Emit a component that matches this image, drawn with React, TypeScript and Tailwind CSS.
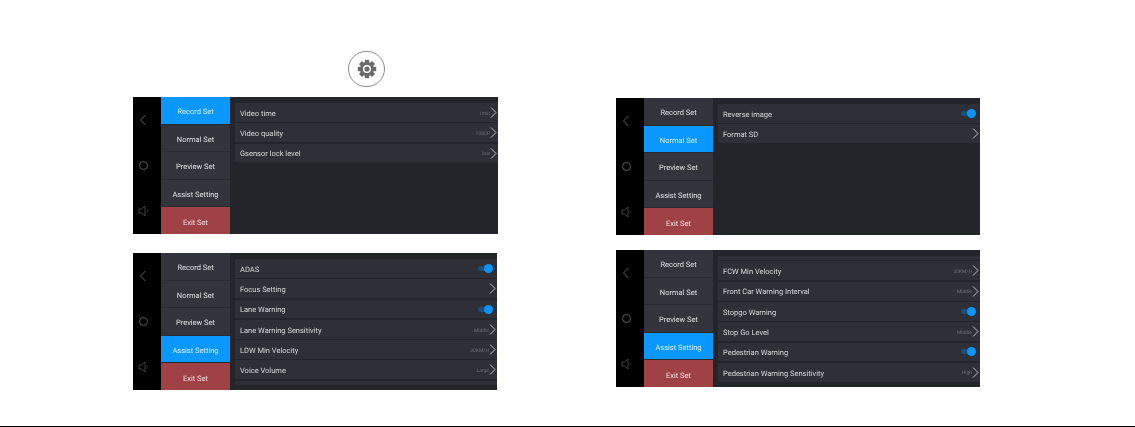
const menu = ['Record Set', 'Normal Set', 'Preview Set', 'Assist Setting'];

type Row = { label: string; value?: string; toggle?: boolean };

const Chevron = () => (
  <svg width="7" height="11" viewBox="0 0 7 11" fill="none" className="shrink-0">
    <path d="M1 0.5 L6 5.5 L1 10.5" stroke="#e4e4e6" strokeWidth="0.8" />
  </svg>
);

const Toggle = () => (
  <div className="relative mr-[4px] h-[5px] w-[14px] rounded-full bg-[#1b4f7c]">
    <div className="absolute right-[-1px] top-[-2px] h-[9px] w-[9px] rounded-full bg-[#0c93f5]" />
  </div>
);

const SideIcons = () => (
  <div className="flex w-[28px] shrink-0 flex-col bg-black pr-[8px]">
    <div className="flex flex-1 items-center justify-center">
      <svg width="8" height="12" viewBox="0 0 8 12" fill="none">
        <path d="M6.5 1 L1.5 6 L6.5 11" stroke="#5b5b5e" strokeWidth="1" />
      </svg>
    </div>
    <div className="flex flex-1 items-center justify-center">
      <div className="h-[9px] w-[9px] rounded-full border border-[#5b5b5e]" />
    </div>
    <div className="flex flex-1 items-center justify-center">
      <svg width="11" height="12" viewBox="0 0 11 12" fill="none">
        <path d="M1 4 H3.5 L7 1 V11 L3.5 8 H1 Z" stroke="#4f4f52" strokeWidth="0.8" />
        <path d="M8.8 4.5 Q10 6 8.8 7.5" stroke="#4f4f52" strokeWidth="0.7" />
      </svg>
    </div>
  </div>
);

const Panel = ({
  active,
  rows,
  width = 'w-[365px]',
  topStrip,
  bottomStrip,
}: {
  active: number;
  rows: Row[];
  width?: string;
  topStrip?: boolean;
  bottomStrip?: boolean;
}) => (
  <div className={`flex h-[137px] ${width} overflow-hidden bg-[#24252b] font-['Roboto',sans-serif] blur-[0.35px] [text-rendering:geometricPrecision]`}>
    <SideIcons />
    <div className="flex w-[69px] shrink-0 flex-col">
      {menu.map((item, i) => (
        <div
          key={item}
          className={`flex flex-1 items-center justify-center border-b border-[#2a2b31] pt-[3px] text-[7.5px] ${
            i === active ? 'bg-[#0a98ff] text-[#d8eeff]' : 'bg-[#33343c] text-[#e0e0e2]'
          }`}
        >
          {item}
        </div>
      ))}
      <div className="flex flex-1 items-center justify-center bg-[#a04145] pt-[3px] text-[7.5px] text-[#f0dfe0]">Exit Set</div>
    </div>
    <div className="flex min-w-0 flex-1 flex-col gap-[1.4px] pl-[5px] pt-[6px]">
      {topStrip && <div className="h-[4px] shrink-0 bg-[#2f3037]" />}
      {rows.map((row) => (
        <div key={row.label} className="flex h-[18.9px] shrink-0 items-center bg-[#2f3037] pl-[5px] pr-px">
          <span className="pt-[2px] text-[7.5px] text-[#d9d9dc]">{row.label}</span>
          <div className="ml-auto flex items-center">
            {row.toggle ? (
              <Toggle />
            ) : (
              <>
                {row.value && <span className="pt-[4px] text-[5px] text-[#6c6d72]">{row.value}</span>}
                <Chevron />
              </>
            )}
          </div>
        </div>
      ))}
      {bottomStrip && <div className="h-[4px] shrink-0 bg-[#2f3037]" />}
    </div>
  </div>
);

const GearButton = () => (
  <div className="ml-[215px] flex h-[36px] w-[37px] items-center justify-center rounded-full border border-[#8a8a8a] bg-white">
    <svg width="20" height="20" viewBox="0 0 20 20">
      {[0, 45, 90, 135, 180, 225, 270, 315].map((deg) => (
        <rect key={deg} x="7.8" y="0.8" width="4.4" height="4" fill="#6a6a6a" transform={`rotate(${deg} 10 10)`} />
      ))}
      <circle cx="10" cy="10" r="5.5" fill="none" stroke="#6a6a6a" strokeWidth="3" />
      <circle cx="10" cy="10" r="2.6" fill="#6a6a6a" />
    </svg>
  </div>
);

export default function App() {
  return (
    <div className="box-border flex h-[427px] w-full overflow-hidden border-b border-black bg-white">
      <div className="ml-[133px] flex flex-col pt-[51px]">
        <GearButton />
        <div className="mt-[10px]">
          <Panel
            active={0}
            rows={[
              { label: 'Video time', value: '1min' },
              { label: 'Video quality', value: '1080P' },
              { label: 'Gsensor lock level', value: 'low' },
            ]}
          />
        </div>
        <div className="mt-[19px]">
          <Panel
            active={3}
            width="w-[364px]"
            bottomStrip
            rows={[
              { label: 'ADAS', toggle: true },
              { label: 'Focus Setting' },
              { label: 'Lane Warning', toggle: true },
              { label: 'Lane Warning Sensitivity', value: 'Middle' },
              { label: 'LDW Min Velocity', value: '30KM/H' },
              { label: 'Voice Volume', value: 'Large' },
            ]}
          />
        </div>
      </div>
      <div className="ml-[118px] flex flex-col pt-[98px]">
        <Panel
          active={1}
          width="w-[364px]"
          rows={[{ label: 'Reverse image', toggle: true }, { label: 'Format SD' }]}
        />
        <div className="mt-[15px]">
          <Panel
            active={3}
            width="w-[364px]"
            topStrip
            rows={[
              { label: 'FCW Min Velocity', value: '30KM/H' },
              { label: 'Front Car Warning Interval', value: 'Middle' },
              { label: 'Stopgo Warning', toggle: true },
              { label: 'Stop Go Level', value: 'Middle' },
              { label: 'Pedestrian Warning', toggle: true },
              { label: 'Pedestrian Warning Sensitivity', value: 'High' },
            ]}
          />
        </div>
      </div>
    </div>
  );
}
